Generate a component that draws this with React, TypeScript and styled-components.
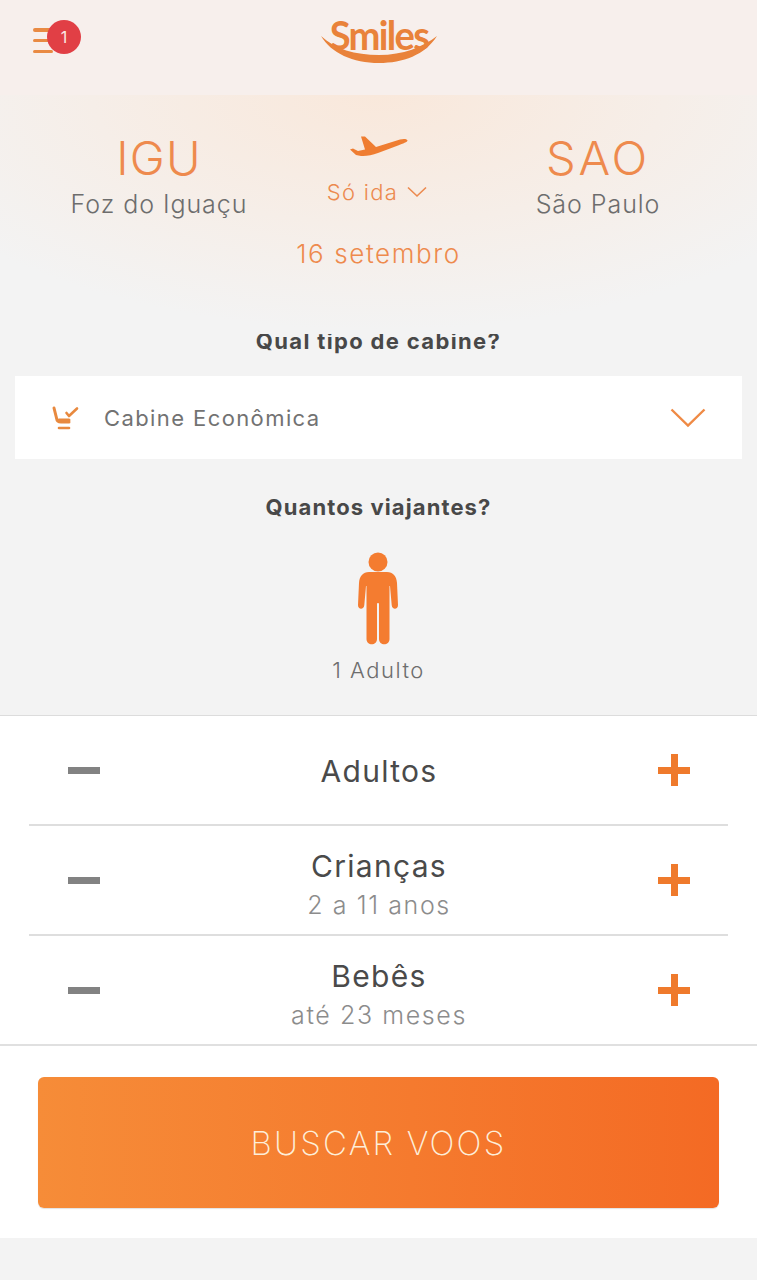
import React from "react";
import styled, { createGlobalStyle } from "styled-components";

const Global = createGlobalStyle`
  html, body { margin: 0; padding: 0; background: #f3f3f3; }
  * { box-sizing: border-box; }
`;

const Page = styled.div`
  width: 757px;
  height: 1280px;
  overflow: hidden;
  display: flex;
  flex-direction: column;
  background: #f3f3f3;
  font-family: Inter, "Liberation Sans", sans-serif;
  color: #4a4a4a;
`;

const Header = styled.header`
  height: 95px;
  flex: none;
  background: #f7efec;
  position: relative;
  display: flex;
  justify-content: center;
  padding-top: 11px;
`;

const MenuButton = styled.div`
  position: absolute;
  left: 33px;
  top: 28px;
  width: 20px;
  height: 25px;
  display: flex;
  flex-direction: column;
  justify-content: space-between;
`;

const MenuLine = styled.span<{ $w: number }>`
  display: block;
  height: 3.5px;
  border-radius: 2px;
  background: #e98a43;
  width: ${(p) => p.$w}px;
`;

const Badge = styled.div`
  position: absolute;
  left: 47px;
  top: 20px;
  width: 34px;
  height: 34px;
  border-radius: 50%;
  background: #e13f45;
  color: #fbe9e4;
  font-size: 16px;
  display: flex;
  align-items: center;
  justify-content: center;
`;

const Logo = styled.div`
  position: relative;
  width: 116px;
  height: 52px;
`;

const LogoText = styled.span`
  position: absolute;
  left: 0;
  right: 0;
  top: 4px;
  text-align: center;
  font-family: Lato, sans-serif;
  font-weight: 700;
  font-size: 41px;
  line-height: 40px;
  letter-spacing: -1.8px;
  color: #e9823a;
  transform: scaleX(0.93);
`;

const LogoSmile = styled.svg`
  position: absolute;
  left: 0;
  top: 0;
`;

const Hero = styled.section`
  height: 239px;
  flex: none;
  position: relative;
  background: radial-gradient(ellipse 520px 235px at 50% 0, #f9e8db 0%, #f6eee8 55%, #f3f3f3 100%);
`;

const Route = styled.div`
  display: grid;
  grid-template-columns: 318px 121px 318px;
  padding-top: 36px;
`;

const Place = styled.div`
  display: flex;
  flex-direction: column;
  align-items: center;
`;

const Code = styled.div<{ $spacing: number }>`
  font-weight: 300;
  font-size: 47px;
  line-height: 54px;
  color: #ee8a4d;
  letter-spacing: ${(p) => p.$spacing}px;
`;

const City = styled.div`
  font-weight: 300;
  font-size: 25px;
  line-height: 30px;
  margin-top: 4px;
  color: #6d6d6d;
  letter-spacing: 0.95px;
`;

const Trip = styled.div`
  display: flex;
  flex-direction: column;
  align-items: center;
  padding-top: 3px;
`;

const TripType = styled.div`
  display: flex;
  align-items: center;
  gap: 9px;
  margin: 21px 3px 0 0;
  font-weight: 300;
  font-size: 22px;
  line-height: 26px;
  color: #ec8a4f;
  white-space: nowrap;
  letter-spacing: 1.3px;
`;

const DateText = styled.div`
  text-align: center;
  font-weight: 300;
  font-size: 26px;
  line-height: 30px;
  color: #ee8a4d;
  margin-top: 20px;
  letter-spacing: 1.6px;
`;

const SectionTitle = styled.h2`
  margin: 0;
  text-align: center;
  font-weight: 700;
  font-size: 22px;
  line-height: 26px;
  color: #484848;
  letter-spacing: 1.1px;
`;

const CabinTitle = styled(SectionTitle)`
  margin-top: -6px;
  margin-bottom: 22px;
  letter-spacing: 1.35px;
`;

const Select = styled.div`
  height: 83px;
  margin: 0 15px;
  flex: none;
  background: #fff;
  display: flex;
  align-items: center;
  padding: 0 36px;
`;

const SelectLabel = styled.span`
  flex: 1;
  margin-left: 23px;
  font-size: 22px;
  font-weight: 400;
  color: #727272;
  letter-spacing: 1.4px;
`;

const Travellers = styled.section`
  height: 256px;
  flex: none;
  padding-top: 35px;
  display: flex;
  flex-direction: column;
  align-items: center;
`;

const Figure = styled.div`
  margin: 32px 2px 0 0;
  height: 94px;
`;

const Summary = styled.div`
  margin-top: 11px;
  font-weight: 300;
  font-size: 22px;
  line-height: 26px;
  color: #6d6d6d;
  letter-spacing: 1.5px;
`;

const White = styled.section`
  flex: none;
  background: #fff;
  border-top: 1px solid #dcdcdc;
`;

const Rows = styled.div`
  border-bottom: 2px solid #e0e0e0;
`;

const Row = styled.div<{ $last?: boolean }>`
  height: ${(p) => (p.$last ? "108px" : "110px")};
  margin: 0 29px;
  padding: 0 38px 0 39px;
  display: grid;
  grid-template-columns: 32px 1fr 32px;
  align-items: center;
  border-bottom: ${(p) => (p.$last ? "none" : "2px solid #dedede")};
`;

const Minus = styled.span`
  display: block;
  width: 32px;
  height: 7px;
  background: #828282;
`;

const Plus = styled.span`
  position: relative;
  display: block;
  width: 32px;
  height: 32px;
  &::before, &::after {
    content: "";
    position: absolute;
    background: #ef7a2c;
  }
  &::before { left: 0; right: 0; top: 12.5px; height: 7px; }
  &::after { top: 0; bottom: 0; left: 12.5px; width: 7px; }
`;

const RowText = styled.div<{ $sub?: boolean }>`
  text-align: center;
  display: flex;
  flex-direction: column;
  align-items: center;
  padding-top: ${(p) => (p.$sub ? "7px" : "1px")};
`;

const RowTitle = styled.div`
  font-size: 30px;
  line-height: 36px;
  font-weight: 400;
  color: #4a4a4a;
  letter-spacing: 1.3px;
`;

const RowSub = styled.div`
  font-size: 25px;
  line-height: 30px;
  font-weight: 300;
  color: #8c8c8c;
  margin-top: 6px;
  letter-spacing: 1.6px;
`;

const Footer = styled.div`
  height: 192px;
  padding: 31px 38px;
  background: #fff;
`;

const SearchButton = styled.div`
  height: 131px;
  width: 681px;
  border-radius: 6px;
  background: linear-gradient(90deg, #f68c38 0%, #f57a2e 55%, #f46a24 100%);
  box-shadow: 0 1px 1px rgba(0, 0, 0, 0.12);
  display: flex;
  align-items: center;
  justify-content: center;
  font-weight: 200;
  font-size: 33px;
  letter-spacing: 2.2px;
  color: #fdeed9;
`;

const Plane = () => (
  <svg width="58" height="24" viewBox="2 0 58 24">
    <path fill="#ef7d31" d="M2 15.5 L5 14.5 L10 17 L17 15.5 L13 2.5 L17 2.5 L28 13 L52 5.5 C56 4.3 59.5 5 59.5 6.5 C59.5 8 55 9.5 50 11.5 L30 19 C24 21 18 22.5 13 22 L8 21 Z" />
  </svg>
);

const SmallChevron = () => (
  <svg width="20" height="12" viewBox="0 0 20 12">
    <path d="M1 1.5 L10 10 L19 1.5" fill="none" stroke="#ec8a4f" strokeWidth="1.6" />
  </svg>
);

const BigChevron = () => (
  <svg width="36" height="20" viewBox="0 0 36 20">
    <path d="M1.5 1.5 L18 17.5 L34.5 1.5" fill="none" stroke="#ef8a45" strokeWidth="2.4" />
  </svg>
);

const SeatIcon = () => (
  <svg width="30" height="26" viewBox="0 0 30 26" style={{ flex: "none" }}>
    <g fill="none" stroke="#e8893f" strokeLinecap="round" strokeLinejoin="round">
      <path d="M3 3 L5.5 13 Q6 17 10 17 H18" strokeWidth="3" />
      <path d="M8 15 H18" strokeWidth="3" />
      <path d="M15.5 8 L18 11 L26 3.5" strokeWidth="2.6" />
      <path d="M8 23 H18" strokeWidth="2.6" />
    </g>
  </svg>
);

const Person = () => (
  <svg width="40" height="94" viewBox="0 0 40 94">
    <circle cx="20" cy="10" r="9.5" fill="#f47c30" />
    <path
      fill="#f47c30"
      d="M11 20 H29 C35 20 38.5 24 39 31 L40 53 C40 58 34 58 33.7 53 L32 34 H31.5 V87 C31.5 94 21 94 21 87 V52 C21 50.5 19 50.5 19 52 V87 C19 94 8.5 94 8.5 87 V34 H8 L6.3 53 C6 58 0 58 0 53 L1 31 C1.5 24 5 20 11 20 Z"
    />
  </svg>
);

const rows = [
  { title: "Adultos" },
  { title: "Crianças", sub: "2 a 11 anos" },
  { title: "Bebês", sub: "até 23 meses" },
];

export default function App() {
  return (
    <Page>
      <Global />
      <Header>
        <MenuButton>
          <MenuLine $w={20} />
          <MenuLine $w={18} />
          <MenuLine $w={20} />
        </MenuButton>
        <Badge>1</Badge>
        <Logo>
          <LogoText>Smiles</LogoText>
          <LogoSmile width="116" height="52" viewBox="0 0 116 52">
            <path fill="#e9823a" d="M0 25 C14 38 34 44 58 44 C82 44 102 36 116 25 C104 44 82 52 58 52 C32 52 10 42 0 25 Z" />
          </LogoSmile>
        </Logo>
      </Header>
      <Hero>
        <Route>
          <Place>
            <Code $spacing={1.2}>IGU</Code>
            <City>Foz do Iguaçu</City>
          </Place>
          <Trip>
            <Plane />
            <TripType>
              Só ida <SmallChevron />
            </TripType>
          </Trip>
          <Place>
            <Code $spacing={2.8}>SAO</Code>
            <City>São Paulo</City>
          </Place>
        </Route>
        <DateText>16 setembro</DateText>
      </Hero>
      <CabinTitle>Qual tipo de cabine?</CabinTitle>
      <Select>
        <SeatIcon />
        <SelectLabel>Cabine Econômica</SelectLabel>
        <BigChevron />
      </Select>
      <Travellers>
        <SectionTitle>Quantos viajantes?</SectionTitle>
        <Figure>
          <Person />
        </Figure>
        <Summary>1 Adulto</Summary>
      </Travellers>
      <White>
        <Rows>
          {rows.map((r, i) => (
            <Row key={r.title} $last={i === rows.length - 1}>
              <Minus />
              <RowText $sub={!!r.sub}>
                <RowTitle>{r.title}</RowTitle>
                {r.sub && <RowSub>{r.sub}</RowSub>}
              </RowText>
              <Plus />
            </Row>
          ))}
        </Rows>
        <Footer>
          <SearchButton>BUSCAR VOOS</SearchButton>
        </Footer>
      </White>
    </Page>
  );
}
